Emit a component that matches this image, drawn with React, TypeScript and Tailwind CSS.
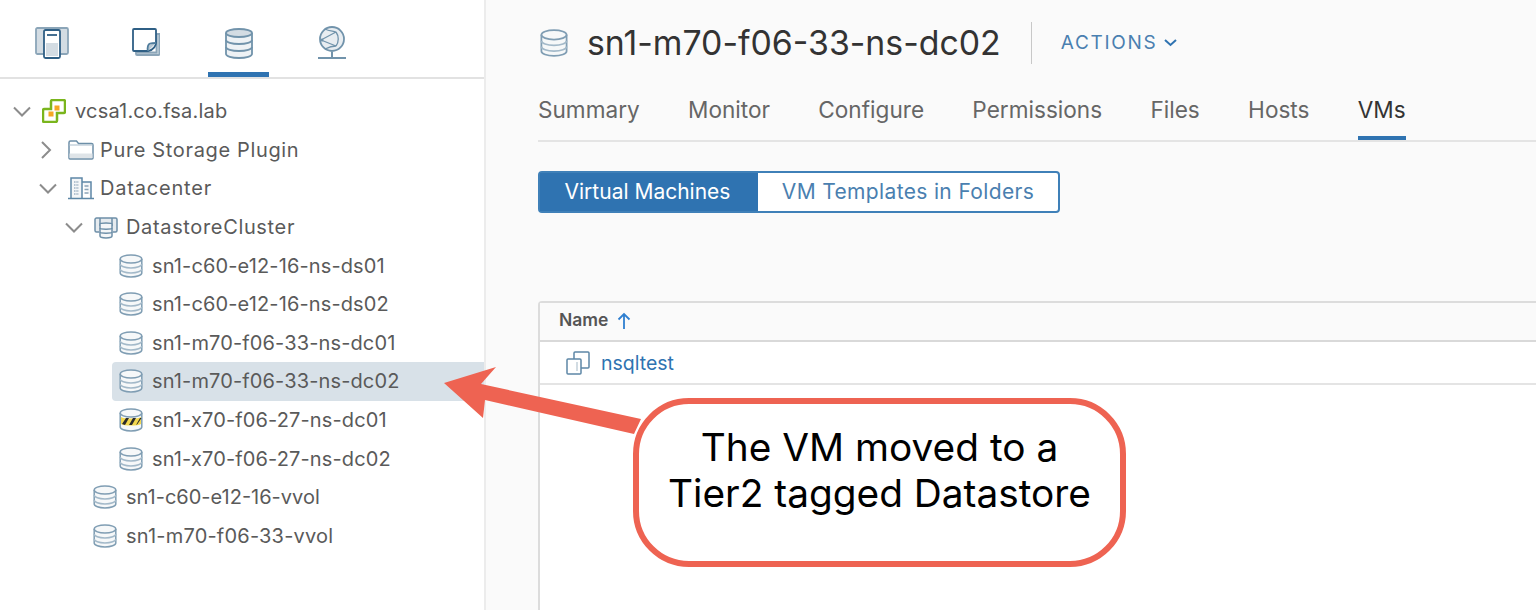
const font = "font-['Inter','Liberation_Sans',sans-serif]";

function Chevron({ open }: { open: boolean }) {
  return (
    <svg width="20" height="20" viewBox="0 0 20 20" fill="none" stroke="#8c8c8c" strokeWidth="2" className="shrink-0">
      {open ? <path d="M2 6.500l8 8 8-8" /> : <path d="M4 2l8 8-8 8" />}
    </svg>
  );
}

function DbIcon({ hazard, size = 24 }: { hazard?: boolean; size?: number }) {
  return (
    <svg width={size} height={size} viewBox="0 0 24 24" fill="none" stroke="#7f9db3" strokeWidth="1.500" className="shrink-0">
      <path d="M1.200 5v14c0 2.200 4.800 4 10.800 4s10.800-1.800 10.800-4V5" fill="#f6f8f9" />
      <ellipse cx="12" cy="5" rx="10.800" ry="4" fill="#f6f8f9" />
      {hazard ? (
        <g stroke="none">
          <path d="M2 9c3 2 17 2 20 0v7c-3 2-17 2-20 0z" fill="#f3d84f" />
          <path d="M3 16l4-6h3l-4 7zM10 17l4-7h3l-4 7zM17 17l4-7h1.500l-4 6z" fill="#2b2b2b" />
        </g>
      ) : (
        <>
          <path d="M1.200 10c0 2.200 4.800 4 10.800 4s10.800-1.800 10.800-4" stroke="#a3b9c9" />
          <path d="M1.200 15c0 2.200 4.800 4 10.800 4s10.800-1.800 10.800-4" stroke="#a3b9c9" />
        </>
      )}
    </svg>
  );
}

function FolderIcon() {
  return (
    <svg width="26" height="20" viewBox="0 0 26 20" fill="none" stroke="#6d8fa8" strokeWidth="1.500" className="shrink-0">
      <path d="M1 18V2.500C1 1.700 1.500 1 2.500 1h6l2 2.500h13c.9 0 1.500.6 1.500 1.500v13c0 .6-.4 1-1 1H2c-.6 0-1-.4-1-1z" fill="#fff" />
      <path d="M1.500 13.500h23V18h-23z" fill="#dfe4e8" stroke="none" />
      <path d="M1 5h24" strokeWidth="1" stroke="#a9bccb" />
    </svg>
  );
}

function DatacenterIcon() {
  return (
    <svg width="26" height="24" viewBox="0 0 26 24" fill="none" stroke="#5d87a6" strokeWidth="1.500" className="shrink-0">
      <path d="M3 22V2h11v20M14 6h9v16" fill="#f4f6f8" />
      <path d="M0 22.500h26" />
      <path d="M6 6h5M6 9h5M6 12h5M6 15h5M6 18h5" strokeDasharray="1.500 0.800" strokeWidth="1.500" stroke="#9fb3c4" />
      <path d="M16.500 10h4M16.500 13.500h4M16.500 17h4" stroke="#8aa3b7" />
    </svg>
  );
}

function ClusterIcon() {
  return (
    <svg width="24" height="24" viewBox="0 0 24 24" fill="none" stroke="#6d8fa8" strokeWidth="1.500" className="shrink-0">
      <path d="M5 17H2.500C1.700 17 1 16.300 1 15.500V4.500C1 3.700 1.700 3 2.500 3h19c.8 0 1.500.7 1.500 1.500v11c0 .8-.7 1.500-1.500 1.500H19" fill="#e6ebef" />
      <path d="M6 3v8M18 3v8" />
      <path d="M6 9c0-1.500 12-1.500 12 0v12c0 2.500-12 2.500-12 0z" fill="#f4f6f8" />
      <path d="M6 13c0 1.500 12 1.500 12 0M6 17c0 1.500 12 1.500 12 0" />
    </svg>
  );
}

function VsphereLogo() {
  return (
    <svg width="24" height="24" viewBox="0 0 24 24" fill="none" className="shrink-0">
      <path d="M9 2.500c0-.8.700-1.500 1.500-1.500H21.500c.8 0 1.500.7 1.500 1.500v10c0 .8-.7 1.500-1.500 1.500H15v7.500c0 .8-.7 1.500-1.500 1.500h-11C1.700 23 1 22.300 1 21.500v-10C1 10.700 1.700 10 2.500 10H9z" stroke="#7ab51d" strokeWidth="2.500" fill="#fff" />
      <rect x="12.500" y="6.500" width="5" height="5" fill="#f5a623" />
      <rect x="6.500" y="12.500" width="5" height="5" fill="#f5a623" />
    </svg>
  );
}

const treeRows = [
  { label: "vcsa1.co.fsa.lab", indent: 12, chevron: "open", icon: <VsphereLogo />, text: "ml-[9px] tracking-[0.2px]" },
  { label: "Pure Storage Plugin", indent: 38, chevron: "closed", icon: <FolderIcon />, text: "ml-[6px] tracking-[0.65px]" },
  { label: "Datacenter", indent: 38, chevron: "open", icon: <DatacenterIcon />, text: "ml-[6px] tracking-[0.8px]" },
  { label: "DatastoreCluster", indent: 64, chevron: "open", icon: <ClusterIcon />, text: "ml-[8px] tracking-[0.65px]" },
  { label: "sn1-c60-e12-16-ns-ds01", indent: 119, icon: <DbIcon />, text: "ml-[9px] tracking-[0.13px]" },
  { label: "sn1-c60-e12-16-ns-ds02", indent: 119, icon: <DbIcon />, text: "ml-[9px] tracking-[0.13px]" },
  { label: "sn1-m70-f06-33-ns-dc01", indent: 119, icon: <DbIcon />, text: "ml-[9px] tracking-[0.13px]" },
  { label: "sn1-m70-f06-33-ns-dc02", indent: 119, icon: <DbIcon />, selected: true, text: "ml-[9px] tracking-[0.13px]" },
  { label: "sn1-x70-f06-27-ns-dc01", indent: 119, icon: <DbIcon hazard />, text: "ml-[9px] tracking-[0.13px]" },
  { label: "sn1-x70-f06-27-ns-dc02", indent: 119, icon: <DbIcon />, text: "ml-[9px] tracking-[0.13px]" },
  { label: "sn1-c60-e12-16-vvol", indent: 93, icon: <DbIcon />, text: "ml-[9px]" },
  { label: "sn1-m70-f06-33-vvol", indent: 93, icon: <DbIcon />, text: "ml-[9px] tracking-[0.2px]" },
];

function TreeRow({ row }: { row: any }) {
  return (
    <div className="h-[38.600px] flex items-center relative" style={{ paddingLeft: row.indent }}>
      {row.selected && <div className="absolute left-[112px] right-0 top-0 bottom-0 bg-[#d8e1e8] rounded-l-[4px]" />}
      {row.chevron && (
        <span className="mr-[10px] relative">
          <Chevron open={row.chevron === "open"} />
        </span>
      )}
      <span className="relative flex items-center">{row.icon}</span>
      <span className={`relative text-[20px] text-[#5a5a5a] whitespace-nowrap ${row.text}`}>{row.label}</span>
    </div>
  );
}

function SideTabs() {
  return (
    <div className="h-[79px] border-b-2 border-[#e2e2e2] flex pl-[22px]">
      <div className="w-[60px] h-full flex items-start justify-center pt-[27px] mr-[34px]">
        <svg width="34" height="32" viewBox="0 0 34 32" fill="none" stroke="#4f7c9c" strokeWidth="1.800">
          <rect x="1" y="1" width="32" height="26" rx="1.500" fill="#d3dce3" stroke="#8ba5b8" />
          <rect x="9" y="3" width="16" height="28" rx="1.500" fill="#fff" stroke="#2f5f85" />
          <path d="M12 8h10" stroke="#2f5f85" />
          <rect x="11" y="16" width="12" height="13" fill="#d3dce3" stroke="none" />
        </svg>
      </div>
      <div className="w-[60px] h-full flex items-start justify-center pt-[28px] mr-[32px]">
        <svg width="28" height="28" viewBox="0 0 28 28" fill="none" strokeWidth="1.800">
          <path d="M4 24.500V26c0 .6.400 1 1 1h21.500c.6 0 1-.4 1-1V6h-3v18.500z" fill="#c9d5de" stroke="#8ba5b8" />
          <path d="M2 1h21c.6 0 1 .4 1 1v13c0 2-2 7-8 8H2c-.6 0-1-.4-1-1V2c0-.6.400-1 1-1z" fill="#fff" stroke="#2f5f85" />
          <path d="M16 23c-1-3 0-7 2-7.500 2-.5 6-.5 6-.5" fill="#b9c8d3" stroke="#4f7c9c" />
        </svg>
      </div>
      <div className="w-[61px] h-full relative flex items-start justify-center pt-[28px] mr-[33px]">
        <svg width="28" height="31" viewBox="0 0 28 31" fill="none" stroke="#7193ab" strokeWidth="1.800">
          <path d="M1 5v21c0 2.200 5.800 4 13 4s13-1.800 13-4V5" fill="#eef2f5" />
          <ellipse cx="14" cy="5" rx="13" ry="4" fill="#d3dce3" />
          <path d="M1 12c0 2.200 5.800 4 13 4s13-1.800 13-4M1 19c0 2.200 5.800 4 13 4s13-1.800 13-4" />
        </svg>
        <div className="absolute left-0 right-0 bottom-0 h-[5px] bg-[#2f73b1]" />
      </div>
      <div className="w-[60px] h-full flex items-start justify-center pt-[26px]">
        <svg width="30" height="34" viewBox="0 0 30 34" fill="none" stroke="#7193ab" strokeWidth="1.800">
          <circle cx="15" cy="13" r="12" fill="#e8edf1" />
          <path d="M4 14l15-8M4 14l15 6M19 6c3 4 3 10 0 14M8 3c4 2 8 2 11 3M8 23c4-2 8-3 11-3" strokeWidth="1.300" />
          <circle cx="5" cy="14" r="1.500" fill="#7193ab" stroke="none" />
          <path d="M15 26v5M1 32h28" strokeWidth="2" />
        </svg>
      </div>
    </div>
  );
}

const tabs = ["Summary", "Monitor", "Configure", "Permissions", "Files", "Hosts", "VMs"];

function App() {
  return (
    <div className={`relative w-[1536px] h-[610px] overflow-hidden flex bg-[#fafafa] ${font}`}>
      <aside className="w-[486px] shrink-0 h-full bg-white border-r-2 border-[#ececec]">
        <SideTabs />
        <div className="pt-[13px]">
          {treeRows.map((row) => (
            <TreeRow key={row.label} row={row} />
          ))}
        </div>
      </aside>

      <main className="flex-1 pl-[52px] flex flex-col min-w-0">
        <div className="h-[86px] flex items-center">
          <span className="ml-[2px]">
            <DbIcon size={28} />
          </span>
          <h1 className="ml-[19px] text-[33.850px] font-normal text-[#333] whitespace-nowrap">sn1-m70-f06-33-ns-dc02</h1>
          <div className="ml-[30px] w-px h-[42px] bg-[#c8c8c8]" />
          <button className="ml-[29px] flex items-center gap-[7px] text-[19px] tracking-[1.700px] text-[#4a7fb0]">
            ACTIONS
            <svg width="13" height="8" viewBox="0 0 13 8" fill="none" stroke="#2f73b1" strokeWidth="2">
              <path d="M1 1l5.500 5 5.500-5" />
            </svg>
          </button>
        </div>

        <nav className="h-[56px] flex gap-[48.300px] border-b-2 border-[#e4e4e4]">
          {tabs.map((t) => (
            <div
              key={t}
              className={`h-[54px] flex items-center pb-[2px] border-b-[4px] text-[22.600px] ${
                t === "VMs" ? "text-[#333] border-[#2f73b1]" : "text-[#666] border-transparent"
              }`}
            >
              {t}
            </div>
          ))}
        </nav>

        <div className="mt-[29px] flex h-[42px] w-[522px] rounded-[4px] border-2 border-[#3f80b8] bg-white text-[21px]">
          <div className="w-[218px] bg-[#2f73b1] text-white flex items-center justify-center pr-[3px]">Virtual Machines</div>
          <div className="flex-1 flex items-center justify-center text-[#4a7fb0] tracking-[0.35px]">VM Templates in Folders</div>
        </div>

        <section className="mt-[88px] flex-1 bg-white border-l-2 border-t-2 border-[#dcdcdc] rounded-tl-[4px]">
          <div className="h-[39px] bg-[#fafafa] border-b-2 border-[#d9d9d9] flex items-center pl-[19px] gap-[9px] pb-[2px]">
            <span className="text-[17.500px] font-semibold text-[#555]">Name</span>
            <svg width="14" height="18" viewBox="0 0 14 18" fill="none" stroke="#2f7fd0" strokeWidth="1.800">
              <path d="M7 17V2M1.500 7.500L7 2l5.500 5.500" />
            </svg>
          </div>
          <div className="h-[43px] border-b-2 border-[#e4e4e4] flex items-center pl-[26px]">
            <svg width="24" height="24" viewBox="0 0 24 24" fill="none" stroke="#5d87a6" strokeWidth="1.500">
              <rect x="8" y="1" width="15" height="16" rx="1" fill="#fff" />
              <rect x="1" y="8" width="14" height="15" rx="1" fill="#fff" />
              <path d="M11 11v9" stroke="#c3d0da" />
            </svg>
            <span className="ml-[11px] text-[19.500px] text-[#2f73b1] pt-[3px]">nsqltest</span>
          </div>
        </section>
      </main>

      <svg className="absolute left-[430px] top-[350px]" width="230" height="100" viewBox="430 350 230 100" fill="#ee6352">
        <path d="M444 383L496 367L481 384L641 419L634 434L485 400L483 418Z" />
      </svg>

      <div className="absolute left-[633px] top-[398px] w-[493px] h-[169px] rounded-[56px] border-[6px] border-[#ee6352] bg-white flex flex-col items-center pt-[20px] text-[38.800px] leading-[46px] text-black">
        <span>The VM moved to a</span>
        <span>Tier2 tagged Datastore</span>
      </div>
    </div>
  );
}

export default App;
